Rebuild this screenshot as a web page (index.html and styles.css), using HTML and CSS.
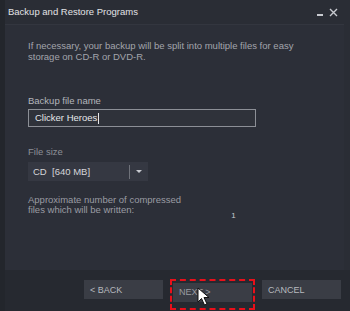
FILE: index.html
```html
<!DOCTYPE html>
<html lang="en">
<head>
  <meta charset="UTF-8">
  <title>Backup and Restore Programs</title>
  <link rel="stylesheet" href="styles.css">
</head>
<body>
  <div class="window">
    <div class="titlebar">
      <span class="title">Backup and Restore Programs</span>
      <span class="controls">
        <span class="min"></span>
        <svg class="close" width="9" height="9" viewBox="0 0 9 9"><path d="M1 1L8 8M8 1L1 8" stroke="#c8cad0" stroke-width="1.4"/></svg>
      </span>
    </div>

    <div class="panel">
      <p class="intro">If necessary, your backup will be split into multiple files for easy<br>storage on CD-R or DVD-R.</p>

      <label class="label">Backup file name</label>
      <div class="input">Clicker Heroes<span class="caret"></span></div>

      <label class="label dim">File size</label>
      <div class="select">
        <span class="value">CD&nbsp; [640 MB]</span>
        <span class="sep"></span>
        <span class="arrow"></span>
      </div>

      <div class="count">
        <p>Approximate number of compressed<br>files which will be written:</p>
        <span class="num">1</span>
      </div>
    </div>

    <div class="footer">
      <button class="btn">&lt; BACK</button>
      <div class="focus">
        <button class="btn">NEXT &gt;</button>
        <svg class="cursor" width="14" height="20" viewBox="0 0 14 20"><path d="M1 1L1 15L4.5 11.5L7.5 18L10 17L7 10.5L12 10.5Z" fill="#fff" stroke="#111" stroke-width="1"/></svg>
      </div>
      <button class="btn">CANCEL</button>
    </div>
  </div>
</body>
</html>
```

FILE: styles.css
```css
body {
  margin: 0;
  background: #23262d;
  font-family: "Liberation Sans", Arial, sans-serif;
}

.window {
  width: 350px;
  height: 311px;
  display: flex;
  flex-direction: column;
  background: #2a2d35;
  border-left: 5px solid #23262c;
  box-sizing: border-box;
}

.titlebar {
  height: 24px;
  display: flex;
  align-items: center;
  justify-content: space-between;
  padding: 0 12px 0 3px;
}

.title {
  color: #e2e3e6;
  font-size: 9.5px;
  margin-top: -1px;
}

.controls {
  display: flex;
  align-items: center;
  gap: 6px;
}

.min {
  width: 6px;
  height: 1.5px;
  background: #c8cad0;
  margin-top: 6px;
}

.panel {
  flex: 1;
  background: #2c2f38;
  margin: 0 6px 0 0;
  padding: 15px 0 0 23px;
  border-top: 1px solid #33363f;
}

.intro {
  margin: 0 0 33px;
  color: #a3a5ac;
  font-size: 9.5px;
  line-height: 11px;
}

.label {
  display: block;
  color: #b4b6bc;
  font-size: 9.5px;
  margin-bottom: 3px;
}

.label.dim {
  color: #8d9097;
  margin-top: 19px;
  margin-bottom: 5px;
}

.input {
  width: 220px;
  height: 16px;
  border: 1px solid #8c8f96;
  background: #2f323a;
  color: #e6e7ea;
  font-size: 9.5px;
  line-height: 16px;
  padding-left: 6px;
  display: flex;
  align-items: center;
}

.caret {
  width: 1px;
  height: 11px;
  background: #e6e7ea;
  margin-left: 1px;
}

.select {
  width: 120px;
  height: 19px;
  background: #353842;
  display: flex;
  align-items: center;
  color: #d5d6da;
  font-size: 9.5px;
}

.select .value {
  flex: 1;
  padding-left: 5px;
}

.sep {
  width: 1px;
  height: 14px;
  background: #6f727a;
}

.arrow {
  width: 0;
  height: 0;
  border-left: 3px solid transparent;
  border-right: 3px solid transparent;
  border-top: 3px solid #c8cad0;
  margin: 0 6px 0 6px;
}

.count {
  margin-top: 14px;
  display: flex;
  align-items: flex-end;
}

.count p {
  margin: 0;
  color: #9a9ca3;
  font-size: 9.5px;
  line-height: 10px;
}

.num {
  color: #c8cad0;
  font-size: 8px;
  margin-left: 50px;
  margin-bottom: -5px;
}

.footer {
  height: 41px;
  background: #262930;
  display: flex;
  align-items: flex-start;
  padding: 10px 0 0 79px;
  box-sizing: border-box;
  gap: 10px;
}

.btn {
  width: 79px;
  height: 19px;
  background: #3a3d45;
  border: none;
  color: #b7b9be;
  font-family: "Liberation Sans", Arial, sans-serif;
  font-size: 9px;
  text-align: left;
  padding: 0 0 0 6px;
}

.focus {
  position: relative;
  border: 2.5px dashed #e8101a;
  margin: -1px -3px 0 -3px;
  padding: 0 1px 6px 1px;
}

.focus .btn {
  color: #9a9ca2;
}

.cursor {
  position: absolute;
  left: 25px;
  top: 6px;
}
```
